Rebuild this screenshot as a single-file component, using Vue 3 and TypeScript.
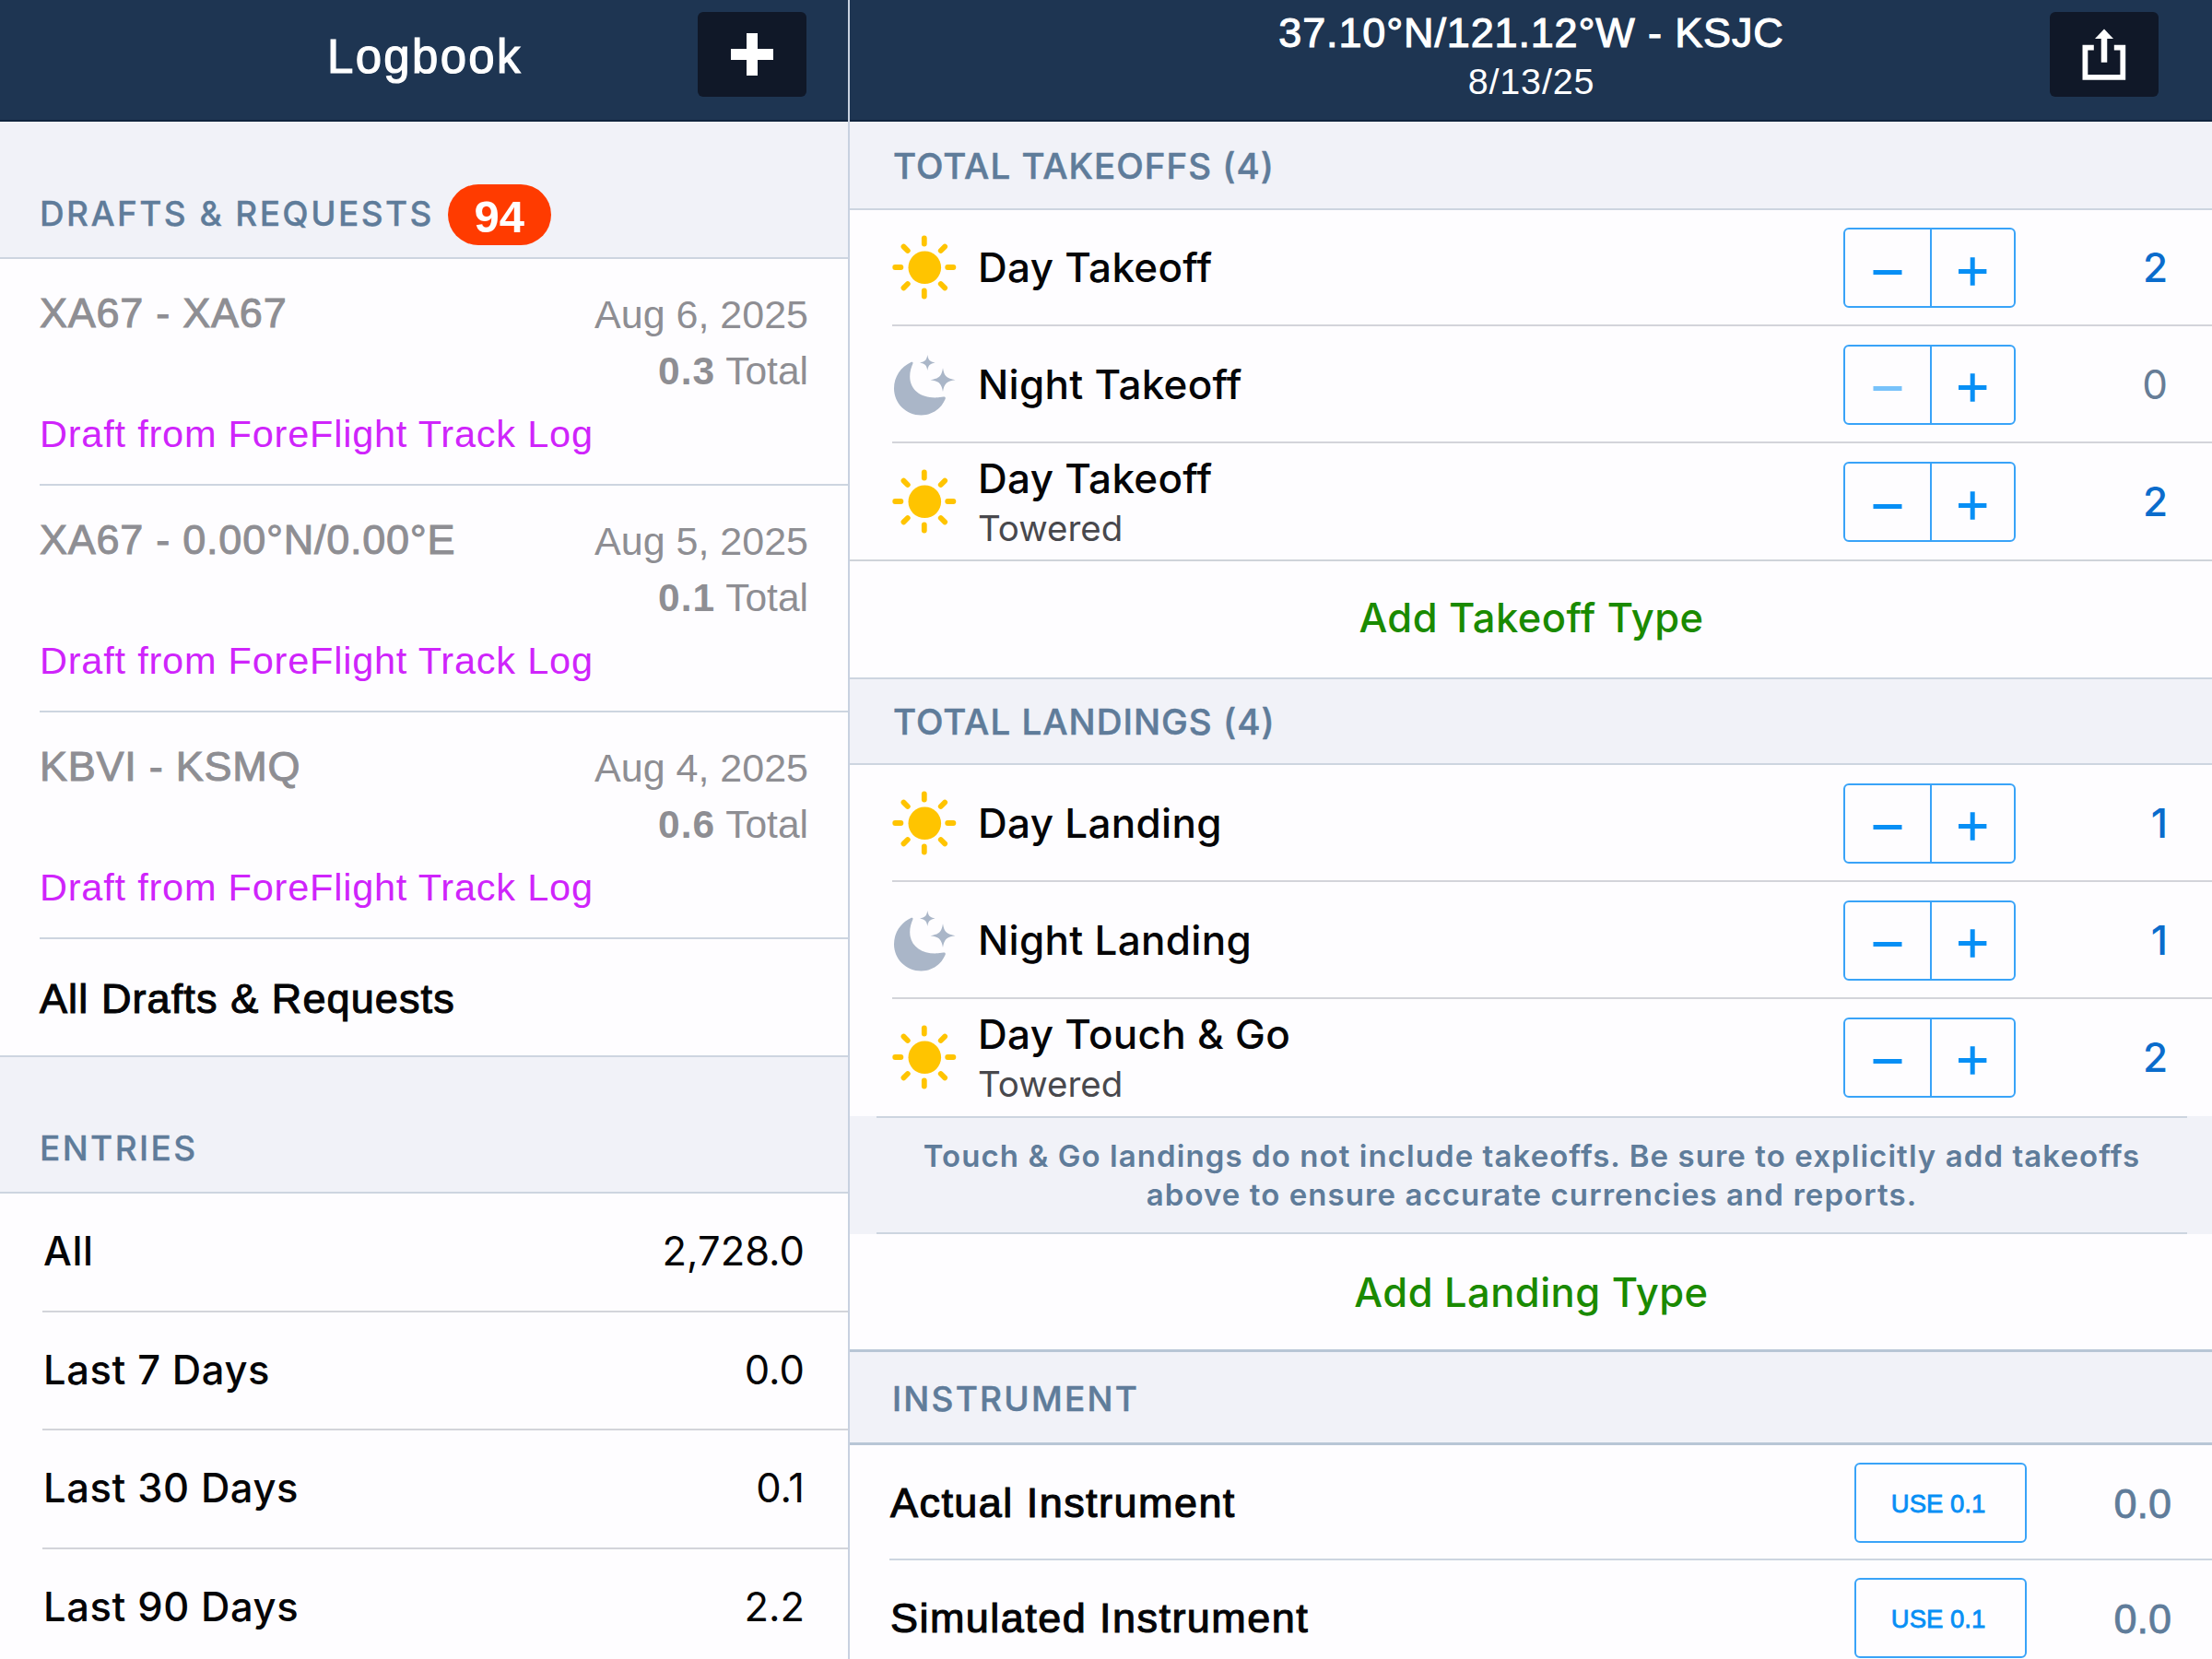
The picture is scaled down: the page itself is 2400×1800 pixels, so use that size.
<template>
  <div class="app">
    <aside class="sidebar">
      <header class="topbar">
        <h1 class="topbar-title">Logbook</h1>
        <button class="icon-button" aria-label="Add entry">
          <svg width="48" height="48" viewBox="0 0 48 48">
            <path d="M18 1h12v17h17v12H30v17H18V30H1V18h17z" fill="#fff" />
          </svg>
        </button>
      </header>

      <div class="side-heading">
        <span class="side-heading-text">DRAFTS &amp; REQUESTS</span>
        <span class="badge">{{ draftCount }}</span>
      </div>
      <div v-for="draft in drafts" :key="draft.date" class="draft">
        <div class="draft-body">
          <div class="draft-route">{{ draft.route }}</div>
          <div class="draft-meta">
            <div>{{ draft.date }}</div>
            <div class="draft-total"><b>{{ draft.total }}</b> Total</div>
          </div>
        </div>
        <div class="draft-source">Draft from ForeFlight Track Log</div>
      </div>
      <div class="all-drafts">All Drafts &amp; Requests</div>

      <div class="side-heading entries-heading">
        <span class="side-heading-text">ENTRIES</span>
      </div>
      <div v-for="entry in entries" :key="entry.label" class="entry">
        <span class="entry-label">{{ entry.label }}</span>
        <span class="entry-value">{{ entry.value }}</span>
      </div>
    </aside>

    <main class="detail">
      <header class="topbar detail-topbar">
        <div class="flight">
          <div class="flight-route">37.10°N/121.12°W - KSJC</div>
          <div class="flight-date">8/13/25</div>
        </div>
        <button class="icon-button" aria-label="Share">
          <svg width="48" height="56" viewBox="0 0 48 56">
            <path d="M12.800 20.600H3.400v32.200h40.900V20.600h-9.500" fill="none" stroke="#fff" stroke-width="5.800" />
            <path d="M24 36.700V8" stroke="#fff" stroke-width="6.500" />
            <path d="M24 .500 34 11H14z" fill="#fff" />
          </svg>
        </button>
      </header>

      <section v-for="group in groups" :key="group.title">
        <div class="group-heading">{{ group.title }} ({{ group.total }})</div>
        <div :class="['counters', { 'has-note': group.note }]">
          <div v-for="(item, i) in group.items" :key="i" class="counter">
            <div class="counter-body">
              <svg v-if="item.icon === 'sun'" class="counter-icon" viewBox="0 0 70 72">
                <circle cx="35.300" cy="36.300" r="17.800" fill="#ffc400" />
                <g stroke="#ffc400" stroke-width="5.800" stroke-linecap="round">
                  <line
                    v-for="n in 8"
                    :key="n"
                    x1="34.800"
                    y1="4.400"
                    x2="34.800"
                    y2="10.600"
                    :transform="`rotate(${n * 45} 34.800 36)`"
                  />
                </g>
              </svg>
              <svg v-else class="counter-icon" viewBox="0 0 70 72">
                <g fill="#aab6c8">
                  <path d="M22.400 13.600C23 12 21.800 11.300 20.400 11.900 9.500 17 2 27.500 2 40.500 2 56.500 15 69.500 31.500 69.500c12 0 21.500-7 26.100-17.600.7-1.700-.4-2.600-2-2.300C35 53.500 19.200 44 19.200 27.500c0-5.500 1.400-9.700 3.200-13.900z" />
                  <path d="M38.300 4c.9 5.600 2.600 7.500 8.300 8.500-5.700 1-7.400 2.900-8.300 8.500-.9-5.600-2.600-7.500-8.300-8.500 5.700-1 7.400-2.900 8.300-8.500z" />
                  <path d="M55 18.300c1.400 9 4.300 11.600 13.500 12.900C59.300 32.500 56.400 35.100 55 44.100c-1.400-9-4.300-11.600-13.500-12.900C50.700 29.900 53.600 27.300 55 18.300z" />
                </g>
              </svg>
              <div :class="['counter-label', { stacked: item.detail }]">
                <div class="counter-name">{{ item.name }}</div>
                <div v-if="item.detail" class="counter-detail">{{ item.detail }}</div>
              </div>
              <div class="stepper">
                <button :disabled="item.count === 0" aria-label="Decrease">
                  <svg width="32" height="40" viewBox="0 0 32 40"><path d="M.5 24.500h31" /></svg>
                </button>
                <button aria-label="Increase">
                  <svg width="32" height="40" viewBox="0 0 32 40"><path d="M0 23.500h30.400M15.200 8.300v30.400" /></svg>
                </button>
              </div>
              <div :class="['counter-value', { zero: item.count === 0 }]">{{ item.count }}</div>
            </div>
          </div>
        </div>
        <div v-if="group.note" class="note">
          <p>{{ group.note[0] }}<br>{{ group.note[1] }}</p>
        </div>
        <div class="add-type">{{ group.action }}</div>
      </section>

      <section class="instrument">
        <div class="group-heading instrument-heading">INSTRUMENT</div>
        <div v-for="name in instruments" :key="name" class="time-row">
          <div class="time-name">{{ name }}</div>
          <button class="use-button">USE 0.1</button>
          <div class="time-value">0.0</div>
        </div>
      </section>
    </main>
  </div>
</template>

<script setup lang="ts">
type Draft = {
  route: string,
  date: string,
  total: string
};

type Counter = {
  icon: 'sun' | 'moon',
  name: string,
  detail?: string,
  count: number
};

type Group = {
  title: string,
  total: number,
  items: Counter[],
  note?: string[],
  action: string
};

const draftCount = 94;

const drafts: Draft[] = [
  { route: 'XA67 - XA67', date: 'Aug 6, 2025', total: '0.3' },
  { route: 'XA67 - 0.00°N/0.00°E', date: 'Aug 5, 2025', total: '0.1' },
  { route: 'KBVI - KSMQ', date: 'Aug 4, 2025', total: '0.6' },
];

const entries = [
  { label: 'All', value: '2,728.0' },
  { label: 'Last 7 Days', value: '0.0' },
  { label: 'Last 30 Days', value: '0.1' },
  { label: 'Last 90 Days', value: '2.2' },
];

const groups: Group[] = [
  {
    title: 'TOTAL TAKEOFFS',
    total: 4,
    items: [
      { icon: 'sun', name: 'Day Takeoff', count: 2 },
      { icon: 'moon', name: 'Night Takeoff', count: 0 },
      { icon: 'sun', name: 'Day Takeoff', detail: 'Towered', count: 2 },
    ],
    action: 'Add Takeoff Type',
  },
  {
    title: 'TOTAL LANDINGS',
    total: 4,
    items: [
      { icon: 'sun', name: 'Day Landing', count: 1 },
      { icon: 'moon', name: 'Night Landing', count: 1 },
      { icon: 'sun', name: 'Day Touch & Go', detail: 'Towered', count: 2 },
    ],
    note: [
      'Touch & Go landings do not include takeoffs. Be sure to explicitly add takeoffs',
      'above to ensure accurate currencies and reports.',
    ],
    action: 'Add Landing Type',
  },
];

const instruments = ['Actual Instrument', 'Simulated Instrument'];
</script>

<style>
body {
  margin: 0;
  overflow: hidden;
}
</style>

<style scoped>
.app {
  display: flex;
  width: 2400px;
  height: 1800px;
  overflow: hidden;
  background: #fefdff;
  color: #050507;
  font-family: Inter, "Liberation Sans", sans-serif;
  white-space: nowrap;
}

.app * {
  box-sizing: border-box;
}

button {
  padding: 0;
  margin: 0;
  background: none;
  border: 0;
  font: inherit;
}

svg {
  display: block;
}

.sidebar {
  width: 922px;
  flex: none;
  border-right: 2px solid #c8d1e0;
}

.detail {
  width: 1478px;
  flex: none;
}

/* top bars */
.topbar {
  display: grid;
  grid-template-columns: 757px 118px;
  height: 132px;
  padding-top: 13px;
  background: #1e3552;
  border-bottom: 2px solid #10233d;
  color: #fff;
}

.topbar-title {
  margin: 0;
  padding: 1px 0 0 355px;
  font: 400 51px/96px "Liberation Sans", sans-serif;
  letter-spacing: 2.3px;
  -webkit-text-stroke: 1.2px #fff;
}

.icon-button {
  display: flex;
  align-items: center;
  justify-content: center;
  width: 118px;
  height: 92px;
  border-radius: 6px;
  background: #101828;
}

.detail-topbar {
  grid-template-columns: 1302px 118px;
}

.flight {
  padding-left: 177px;
  text-align: center;
  font-family: "Liberation Sans", sans-serif;
}

.flight-route {
  margin-top: -5px;
  font-size: 45px;
  line-height: 56px;
  letter-spacing: 0.85px;
  -webkit-text-stroke: 1.1px #fff;
}

.flight-date {
  font-size: 39.5px;
  line-height: 49px;
  letter-spacing: 0.8px;
}

/* sidebar */
.side-heading {
  display: flex;
  align-items: center;
  height: 149px;
  padding: 66px 43px 15px;
  background: #f1f2f8;
  border-bottom: 2px solid #cdd5e0;
  color: #5f7c9a;
}

.entries-heading {
  height: 148px;
  padding-top: 65px;
}

.side-heading-text {
  font-size: 37px;
  font-weight: 500;
  letter-spacing: 2.4px;
  -webkit-text-stroke: 0.3px #5f7c9a;
}

.badge {
  width: 112px;
  height: 66px;
  margin: 4px 0 0 15px;
  border-radius: 33px;
  background: #ff3b00;
  color: #fff;
  font: bold 49px/70px "Liberation Sans", sans-serif;
  text-align: center;
}

.draft {
  height: 246px;
  margin-left: 43px;
  padding: 28px 43px 0 0;
  border-bottom: 2px solid #cdd5e0;
  font-family: "Liberation Sans", sans-serif;
  color: #8e8e93;
}

.draft-body {
  display: flex;
  justify-content: space-between;
  line-height: 62px;
}

.draft-route {
  font-size: 45px;
  letter-spacing: 0.75px;
  -webkit-text-stroke: 1px #8e8e93;
}

.draft-meta {
  padding-top: 1px;
  font-size: 43px;
  text-align: right;
}

.draft-total {
  font-size: 42.5px;
}

.draft-total b {
  letter-spacing: 1px;
}

.draft-source {
  margin-top: 7px;
  font-size: 41.5px;
  line-height: 60px;
  letter-spacing: 0.78px;
  color: #cf24fb;
}

.all-drafts {
  height: 128px;
  padding: 2px 0 0 43px;
  border-bottom: 2px solid #cdd5e0;
  font: 400 45px/126px "Liberation Sans", sans-serif;
  letter-spacing: 1.1px;
  -webkit-text-stroke: 1.1px #050507;
}

.entry {
  display: flex;
  align-items: center;
  justify-content: space-between;
  height: 128.5px;
  margin-left: 46px;
  padding: 0 47px 2px 1px;
  border-bottom: 2px solid #d3d4da;
  font-size: 43.5px;
}

.entry-label {
  font-weight: 500;
  letter-spacing: 0.6px;
}

/* takeoffs and landings */
.group-heading {
  height: 96px;
  padding-left: 47px;
  background: #f1f2f8;
  border-bottom: 2px solid #cdd5e0;
  color: #5f7c9a;
  font-size: 38.5px;
  font-weight: 500;
  line-height: 96px;
  letter-spacing: 1px;
  -webkit-text-stroke: 0.5px #5f7c9a;
}

section + section .group-heading {
  height: 93px;
  line-height: 93px;
}

.counters {
  display: grid;
  grid-template-rows: 126px 127px 128px;
}

.counters.has-note {
  grid-template-rows: 127px 127px 127px;
}

.counter {
  padding-left: 46px;
}

.counter-body {
  display: flex;
  align-items: center;
  height: 100%;
  padding-right: 48px;
  border-bottom: 2px solid #d3d4da;
}

.counter:last-child {
  padding-left: 0;
  border-bottom: 2px solid #cfd3da;
}

.counter:last-child .counter-body {
  padding-left: 46px;
  border-bottom: 0;
}

.has-note .counter:last-child {
  padding-bottom: 2px;
  border: 0;
}

.counter-icon {
  width: 70px;
  height: 72px;
  flex: none;
}

.counter-label {
  flex: 1;
  padding-left: 23px;
}

.counter-label.stacked {
  padding-top: 4px;
}

.counter-name {
  font-size: 44px;
  font-weight: 500;
  line-height: 54px;
  letter-spacing: 0.3px;
}

.counter-detail {
  font-size: 38.5px;
  line-height: 54px;
  color: #48484d;
}

.stepper {
  display: grid;
  grid-template-columns: 94px 1fr;
  width: 187px;
  height: 87px;
  margin-top: 1px;
  border: 2px solid #39a3f8;
  border-radius: 6px;
}

.stepper button {
  display: flex;
  align-items: center;
  justify-content: center;
}

.stepper button:first-child {
  border-right: 2px solid #39a3f8;
}

.stepper path {
  fill: none;
  stroke: #078ff5;
  stroke-width: 5;
}

.stepper button:disabled path {
  stroke: #78c2fa;
}

.counter-value {
  width: 165px;
  text-align: right;
  color: #0a6ccc;
  font-size: 44px;
  font-weight: 500;
}

.counter-value.zero {
  color: #667d97;
  font-weight: 400;
}

.note {
  height: 128px;
  padding: 0 27px 0 29px;
  background: #f1f2f8;
}

.note p {
  height: 128px;
  margin: 0;
  padding-top: 21px;
  border-top: 2px solid #cdd5e0;
  border-bottom: 2px solid #cdd5e0;
  color: #5f7c9a;
  font-size: 33px;
  font-weight: 600;
  line-height: 41.5px;
  letter-spacing: 1.07px;
  text-align: center;
}

.add-type {
  height: 128px;
  padding-left: 1px;
  border-bottom: 2px solid #cdd5e0;
  color: #1a8a00;
  font-size: 43.5px;
  font-weight: 500;
  line-height: 123px;
  letter-spacing: 0.45px;
  text-align: center;
}

.note + .add-type {
  border-bottom: 3px solid #b8c6d6;
  line-height: 126px;
}

/* instrument */
section.instrument .instrument-heading {
  height: 101px;
  padding-left: 46px;
  border-bottom: 3px solid #b8c6d6;
  font-size: 37px;
  line-height: 101px;
  letter-spacing: 2.25px;
}

.time-row {
  display: flex;
  align-items: center;
  height: 125px;
  margin-left: 43px;
  padding-right: 44px;
  border-bottom: 2px solid #cdd5e0;
  font-family: "Liberation Sans", sans-serif;
}

.time-name {
  flex: 1;
  padding: 2px 0 0 1px;
  font-size: 45px;
  letter-spacing: 1.45px;
  -webkit-text-stroke: 1.1px #050507;
}

.use-button {
  width: 187px;
  height: 87px;
  margin-top: 1px;
  padding: 3px 5px 0 0;
  border: 2px solid #39a3f8;
  border-radius: 6px;
  color: #078ff5;
  font-size: 27.5px;
  -webkit-text-stroke: 0.8px #078ff5;
}

.time-value {
  width: 157px;
  padding-top: 4px;
  color: #5f7c9a;
  font-size: 45px;
  text-align: right;
  -webkit-text-stroke: 0.8px #5f7c9a;
}
</style>
